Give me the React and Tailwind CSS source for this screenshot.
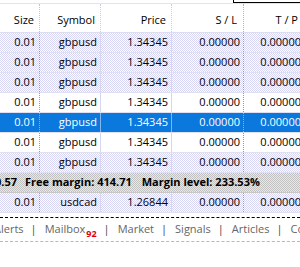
const rows = [
  { size: "0.01", symbol: "gbpusd", price: "1.34345", bg: "dots" },
  { size: "0.01", symbol: "gbpusd", price: "1.34345", bg: "dots" },
  { size: "0.01", symbol: "gbpusd", price: "1.34345", bg: "dots" },
  { size: "0.01", symbol: "gbpusd", price: "1.34345", bg: "white" },
  { size: "0.01", symbol: "gbpusd", price: "1.34345", bg: "sel" },
  { size: "0.01", symbol: "gbpusd", price: "1.34345", bg: "white" },
  { size: "0.01", symbol: "gbpusd", price: "1.34345", bg: "dots" },
];

const dots =
  "bg-[conic-gradient(#d6d6f4_25%,#ffffff_0_50%,#d6d6f4_0_75%,#ffffff_0)] bg-[length:2px_2px]";

function Row({ size, symbol, price, bg }) {
  const sel = bg === "sel";
  const rowBg = sel ? "bg-[#0a78dc] text-white" : bg === "dots" ? dots : "bg-white";
  const grey = sel ? "border-[#7fb6ec]" : "border-[#9a9a9a]";
  const lav = sel ? "border-[#7fb6ec]" : "border-[#d6d6f2]";
  return (
    <div className={`flex h-[20px] border-b border-[#e0e0f4] ${rowBg}`}>
      <div className={`w-[40px] shrink-0 border-r border-dotted ${grey} flex items-center justify-end pr-[3px]`}>
        {size}
      </div>
      <div className={`w-[61px] shrink-0 border-r ${lav} flex items-center justify-end pr-[3px]`}>
        {symbol}
      </div>
      <div className={`w-[71px] shrink-0 border-r ${lav} flex items-center justify-end pr-[3px]`}>
        {price}
      </div>
      <div className={`w-[72px] shrink-0 border-r border-dotted ${grey} flex items-center justify-end pr-[3px]`}>
        0.00000
      </div>
      <div className="w-[60px] shrink-0 flex items-center justify-end pr-[3px]">0.00000</div>
    </div>
  );
}

export default function App() {
  return (
    <div className="w-[300px] h-[267px] overflow-hidden bg-white text-black text-[11px] font-['Open_Sans',Arial,sans-serif]">
      {/* top strip */}
      <div className="flex h-[4px] border-b border-[#e4e4e4]">
        <div className="flex-1" />
        <div className="w-[67px] border-l border-b border-black bg-white" />
      </div>

      {/* header */}
      <div className="flex h-[29px] border-b border-[#dcdcf2] bg-white">
        <div className="w-[40px] shrink-0 border-r border-dotted border-[#c4c4c4] flex items-end justify-end pr-[5px] pb-[4px]">
          Size
        </div>
        <div className="w-[61px] shrink-0 border-r border-dotted border-[#c8c8f0] flex items-end justify-end pr-[5px] pb-[4px]">
          Symbol
        </div>
        <div className="w-[71px] shrink-0 border-r border-dotted border-[#c8c8f0] flex items-end justify-end pr-[5px] pb-[4px]">
          Price
        </div>
        <div className="w-[72px] shrink-0 border-r border-dotted border-[#b4b4b4] flex items-end justify-end pr-[6px] pb-[4px]">
          S / L
        </div>
        <div className="w-[60px] shrink-0 flex items-end justify-end pr-[6px] pb-[4px]">T / P</div>
      </div>

      {rows.map((r, i) => (
        <Row key={i} {...r} />
      ))}

      {/* margin summary */}
      <div className="h-[20px] flex items-center border-b border-[#c8c8c8] bg-[conic-gradient(#c2c2c2_25%,#e8e8e8_0_50%,#c2c2c2_0_75%,#e8e8e8_0)] bg-[length:2px_2px] font-bold text-[11px] whitespace-nowrap">
        <span className="ml-[-5px]">0.57</span>
        <span className="ml-[8px]">Free margin: 414.71</span>
        <span className="ml-[10px]">Margin level: 233.53%</span>
      </div>

      <Row size="0.01" symbol="usdcad" price="1.26844" bg="dots" />

      {/* tab bar */}
      <div className="mt-[4px] border-t border-black h-[25px] flex items-center whitespace-nowrap text-[11px] text-[#666666] border-b border-dashed border-b-[#b8b8b8] pb-[1px]">
        <span className="ml-[-6px]">Alerts</span>
        <span className="ml-[7px] mr-[8px] text-[#444444]">|</span>
        <span>Mailbox</span>
        <span className="ml-[1px] mt-[8px] text-[9px] font-bold text-[#e00000] leading-none">92</span>
        <span className="ml-[7px] mr-[8px] text-[#444444]">|</span>
        <span>Market</span>
        <span className="ml-[7px] mr-[8px] text-[#444444]">|</span>
        <span>Signals</span>
        <span className="ml-[7px] mr-[8px] text-[#444444]">|</span>
        <span>Articles</span>
        <span className="ml-[7px] mr-[8px] text-[#444444]">|</span>
        <span>Code Base</span>
      </div>
    </div>
  );
}
